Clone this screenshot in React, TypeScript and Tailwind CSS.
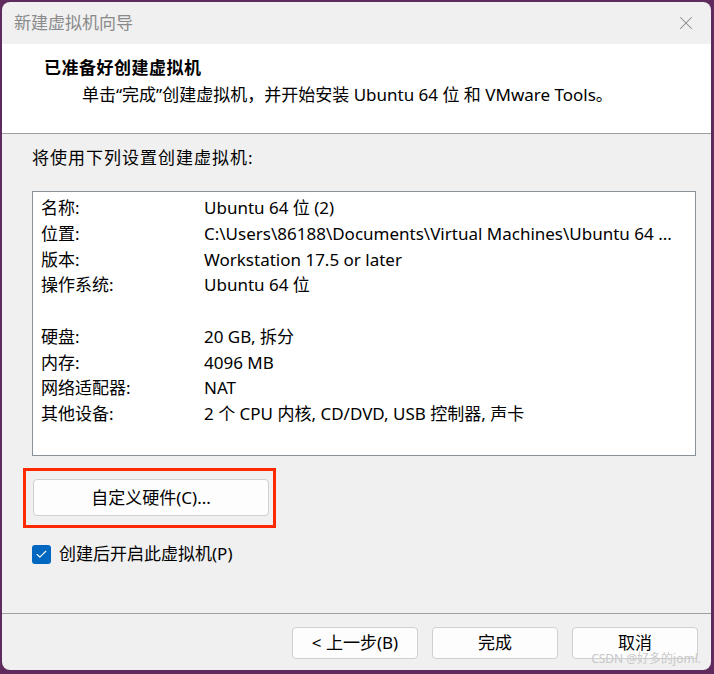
import { Check, X } from "lucide-react";

const font = { fontFamily: '"Noto Sans", "Noto Sans CJK SC", sans-serif' };

const rows: [string, string][] = [
  ["名称:", "Ubuntu 64 位 (2)"],
  ["位置:", "C:\\Users\\86188\\Documents\\Virtual Machines\\Ubuntu 64 ..."],
  ["版本:", "Workstation 17.5 or later"],
  ["操作系统:", "Ubuntu 64 位"],
  ["", ""],
  ["硬盘:", "20 GB, 拆分"],
  ["内存:", "4096 MB"],
  ["网络适配器:", "NAT"],
  ["其他设备:", "2 个 CPU 内核, CD/DVD, USB 控制器, 声卡"],
];

function FooterButton({ label }: { label: string }) {
  return (
    <button className="flex h-[32px] w-[126px] items-center justify-center rounded-[4px] border border-[#d0d0d0] bg-[#fdfdfd] text-[17px] text-black">
      {label}
    </button>
  );
}

export default function App() {
  return (
    <div className="h-[674px] w-[714px] bg-[#5e2b5c] pl-[2px] pt-[2px]" style={font}>
      <div className="flex h-[668px] w-[709px] flex-col overflow-hidden rounded-[8px] bg-[#f0f0f0]">
        <div className="flex h-[42px] shrink-0 items-center justify-between pl-[12px] pr-[14px]">
          <span className="text-[17px] text-[#8a8a8a]">新建虚拟机向导</span>
          <X className="h-[22px] w-[22px] text-[#8a8a8a]" strokeWidth={1.1} />
        </div>

        <div className="h-[90px] shrink-0 border-b border-[#a0a0a0] bg-white pl-[42px] pt-[12px]">
          <div className="text-[17px] font-bold leading-[24px] tracking-[0.5px] text-black">已准备好创建虚拟机</div>
          <div className="mt-[3px] whitespace-nowrap pl-[38px] text-[17px] leading-[24px] text-black">
            单击“完成”创建虚拟机，并开始安装 Ubuntu 64 位 和 VMware Tools。
          </div>
        </div>

        <div className="flex flex-1 flex-col px-[30px]">
          <div className="mt-[12px] text-[17px] leading-[24px] tracking-[1px] text-black">将使用下列设置创建虚拟机:</div>

          <div className="mt-[21px] h-[265px] w-[664px] border border-[#8a9196] bg-white pl-[8px] pt-[3px]">
            {rows.map(([k, v], i) => (
              <div key={i} className="flex h-[25.75px] items-center text-[17px] text-black">
                <span className="w-[163px] shrink-0">{k}</span>
                <span className="whitespace-nowrap">{v}</span>
              </div>
            ))}
          </div>

          <div className="ml-[-9px] mt-[12px] h-[60px] w-[253px] border-[3px] border-[#ff2a00] pl-[7px] pt-[8px]">
            <button className="flex h-[37px] w-[236px] items-center justify-center rounded-[4px] border border-[#d0d0d0] bg-[#fdfdfd] text-[17px] text-black">
              自定义硬件(C)...
            </button>
          </div>

          <div className="mt-[15px] flex items-center gap-[8px]">
            <div className="flex h-[19px] w-[19px] items-center justify-center rounded-[3px] bg-[#0067c0]">
              <Check className="h-[13px] w-[13px] text-white" strokeWidth={2} />
            </div>
            <span className="text-[17px] leading-[22px] text-black">创建后开启此虚拟机(P)</span>
          </div>
        </div>

        <div className="relative h-[57px] shrink-0 border-t border-[#a0a0a0]">
          <div className="flex justify-end gap-[14px] pr-[13px] pt-[13px]">
            <FooterButton label="< 上一步(B)" />
            <FooterButton label="完成" />
            <FooterButton label="取消" />
          </div>
          <span className="absolute bottom-[2px] right-[10px] text-[12px] text-[#c8c8c8]">CSDN @好多的joml.</span>
        </div>
      </div>
    </div>
  );
}
